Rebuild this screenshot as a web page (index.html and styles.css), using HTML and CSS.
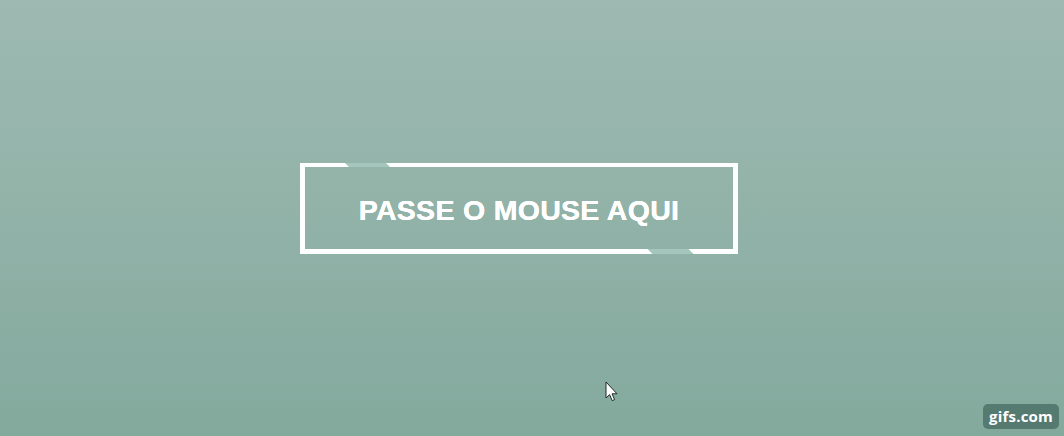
FILE: index.html
```html
<!DOCTYPE html>
<html lang="pt">
<head>
<meta charset="utf-8">
<title>Passe o mouse aqui</title>
<link rel="stylesheet" href="styles.css">
</head>
<body>
<main class="stage">
  <a class="btn" href="#">
    <span class="btn-label">PASSE O MOUSE AQUI</span>
  </a>
</main>
<svg class="cursor" width="14" height="22" viewBox="0 0 14 22" aria-hidden="true">
  <path d="M1 1 L1 17 L4.6 13.6 L7.2 19.6 L9.6 18.6 L7 12.8 L12 12.8 Z" fill="#ffffff" stroke="#1f2a27" stroke-width="1" stroke-linejoin="round"/>
</svg>
<div class="badge">gifs.com</div>
</body>
</html>
```
FILE: styles.css
```css
html, body {
  margin: 0;
  height: 100%;
}
body {
  width: 1064px;
  height: 436px;
  overflow: hidden;
  position: relative;
  background: linear-gradient(180deg, #9db9b1 0%, #93b3a9 45%, #83a99d 100%);
  font-family: "Liberation Sans", Arial, sans-serif;
}
.stage {
  display: flex;
  justify-content: flex-start;
  padding-top: 163px;
  padding-left: 300px;
}
.btn {
  position: relative;
  box-sizing: border-box;
  width: 438px;
  height: 91px;
  border: 5px solid #ffffff;
  border-top-width: 4px;
  display: flex;
  align-items: center;
  justify-content: center;
  text-decoration: none;
}
.btn::before,
.btn::after {
  content: "";
  position: absolute;
  width: 41px;
  height: 5px;
  background: #a5c6bc;
  transform: skewX(45deg);
}
.btn::before {
  top: -4px;
  height: 4px;
  left: 42px;
}
.btn::after {
  bottom: -5px;
  left: 345px;
}
.btn-label {
  color: #ffffff;
  font-weight: 700;
  font-size: 28.5px;
  letter-spacing: 0.3px;
  line-height: 1;
  padding-top: 4px;
  text-shadow: 0 0 0.6px #ffffff, 0 0 0.6px #ffffff;
}
.cursor {
  position: absolute;
  left: 605px;
  top: 381px;
}
.badge {
  position: absolute;
  right: 5px;
  bottom: 7px;
  padding: 3px 6px 4px 6px;
  border-radius: 5px;
  background: rgba(70, 105, 96, 0.75);
  color: #ffffff;
  font-family: "Open Sans", "Liberation Sans", sans-serif;
  font-weight: 700;
  font-size: 15px;
  line-height: 18px;
  letter-spacing: 0.2px;
}
```
